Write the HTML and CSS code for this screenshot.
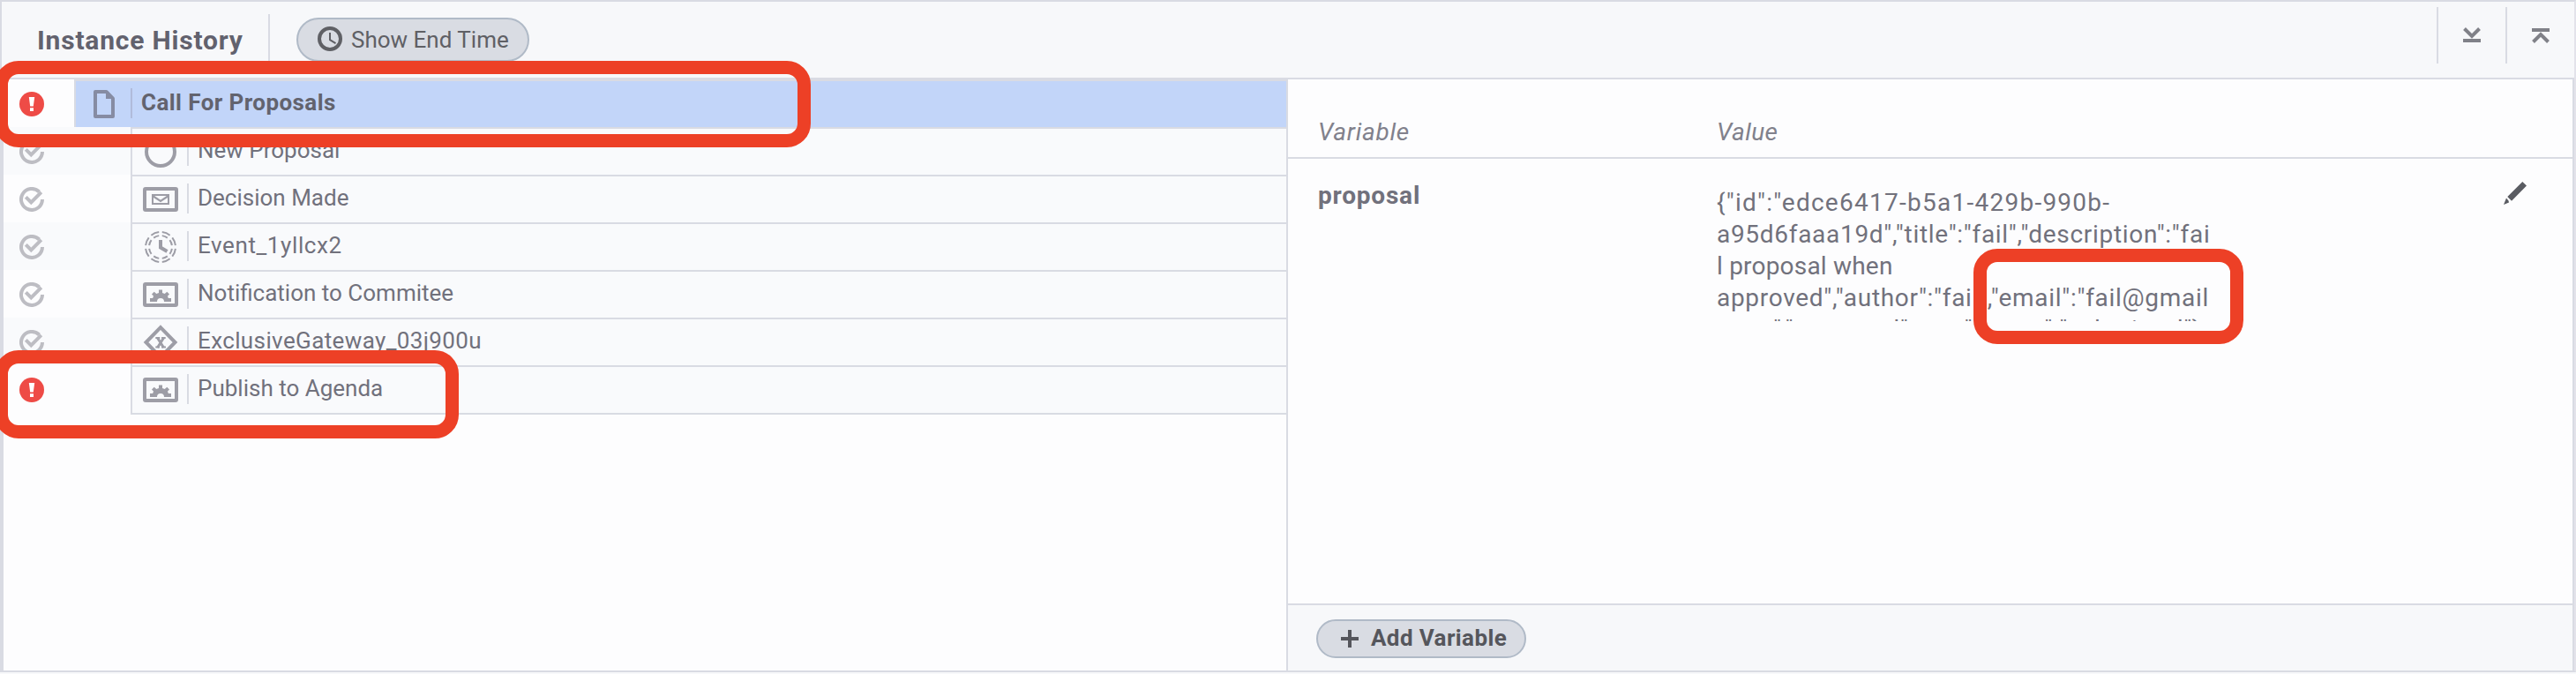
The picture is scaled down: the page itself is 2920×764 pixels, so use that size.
FILE: index.html
```html
<!DOCTYPE html>
<html lang="en">
<head>
<meta charset="utf-8">
<title>Instance History</title>
<link rel="stylesheet" href="styles.css">
</head>
<body>
<svg class="defs" width="0" height="0" aria-hidden="true">
  <symbol id="check" viewBox="0 0 28 28"><path d="M26 14A12 12 0 1 1 22.5 5.5" fill="none" stroke="currentColor" stroke-width="4"/><path d="M7.3 11.3l6 6.1L24.8 5.9" fill="none" stroke="currentColor" stroke-width="4"/></symbol>
  <symbol id="alert" viewBox="0 0 28 28"><circle cx="14" cy="14" r="14" fill="#ee4b46"/><path d="M10.8 6h6.4l-1.4 10.4h-3.6zM12 18.2h4V22h-4z" fill="#fff"/></symbol>
  <symbol id="task" viewBox="0 0 40 28"><rect x="2" y="2" width="36" height="24" rx="1" fill="none" stroke="currentColor" stroke-width="4"/><path d="M8 22v-4h3.2q.2-1.3.9-2.3L10 13.500l2.700-2.700 2.600 2.300 2.700-1V8.500h4v3.600l2.700 1 2.600-2.300L30 13.500l-2.100 2.200q.7 1 .9 2.300H32v4h-8a4 4 0 0 0-8 0z" fill="currentColor"/></symbol>
  <symbol id="message" viewBox="0 0 40 28"><rect x="2" y="2" width="36" height="24" rx="1" fill="none" stroke="currentColor" stroke-width="4"/><rect x="11" y="9" width="18" height="10" fill="none" stroke="currentColor" stroke-width="2"/><path d="M11 10l9 6 9-6" fill="none" stroke="currentColor" stroke-width="2.200"/></symbol>
  <symbol id="start" viewBox="0 0 36 36"><circle cx="18" cy="18" r="16" fill="none" stroke="currentColor" stroke-width="4"/></symbol>
  <symbol id="timer" viewBox="0 0 36 36"><g fill="none" stroke="currentColor" stroke-width="2"><circle cx="18" cy="18" r="17" pathLength="80" stroke-dasharray="7.200 2.800" stroke-dashoffset="-1.400"/><circle cx="18" cy="18" r="13" pathLength="80" stroke-dasharray="6.400 3.600" stroke-dashoffset="-1.800"/></g><path d="M18 10v8.500l7.500 4.500" fill="none" stroke="currentColor" stroke-width="4"/></symbol>
  <symbol id="gateway" viewBox="0 0 40 40"><path d="M20 3.200L36.500 20 20 36.800 3.500 20z" fill="none" stroke="currentColor" stroke-width="4"/><path d="M16.500 15l7 11M23.500 15l-7 11" fill="none" stroke="currentColor" stroke-width="3"/><path d="M14.300 15h5M21 15h4.700M14.300 25.500h4.700M21 25.500h5" fill="none" stroke="currentColor" stroke-width="2"/></symbol>
  <symbol id="doc" viewBox="0 0 24 32"><path d="M2 2h12.500L22 9.700V30H2z" fill="none" stroke="currentColor" stroke-width="4" stroke-linejoin="round"/><path d="M14 1l9 9h-9z" fill="currentColor"/></symbol>
</svg>

<div class="frame">
  <header class="header">
    <h1 class="title">Instance History</h1>
    <span class="header-sep"></span>
    <button class="pill pill-time">
      <svg width="28" height="28" viewBox="0 0 28 28" fill="none" stroke="currentColor"><circle cx="14" cy="14" r="12" stroke-width="4"/><path d="M14 7v8.200l6.500 4" stroke-width="2"/></svg>
      <span>Show End Time</span>
    </button>
    <div class="tools">
      <button class="tool"><svg width="20" height="20" viewBox="0 0 20 20"><path d="M1.500 2.500L10 11l8.500-8.500" fill="none" stroke="currentColor" stroke-width="4"/><path d="M0 14h20v4H0z" fill="currentColor"/></svg></button>
      <button class="tool"><svg width="20" height="20" viewBox="0 0 20 20"><path d="M1.500 17.500L10 9l8.500 8.500" fill="none" stroke="currentColor" stroke-width="4"/><path d="M0 2h20v4H0z" fill="currentColor"/></svg></button>
    </div>
  </header>

  <main class="panels">
    <section class="history">
      <div class="row row-root">
        <div class="state"><svg class="badge"><use href="#alert"/></svg></div>
        <div class="item"><span class="icon"><svg width="24" height="32"><use href="#doc"/></svg></span><span class="name">Call For Proposals</span></div>
      </div>
      <div class="row">
        <div class="state"><svg class="badge"><use href="#check"/></svg></div>
        <div class="item"><span class="icon"><svg width="36" height="36"><use href="#start"/></svg></span><span class="name">New Proposal</span></div>
      </div>
      <div class="row">
        <div class="state"><svg class="badge"><use href="#check"/></svg></div>
        <div class="item"><span class="icon"><svg width="40" height="28"><use href="#message"/></svg></span><span class="name">Decision Made</span></div>
      </div>
      <div class="row">
        <div class="state"><svg class="badge"><use href="#check"/></svg></div>
        <div class="item"><span class="icon"><svg width="36" height="36"><use href="#timer"/></svg></span><span class="name wide">Event_1yllcx2</span></div>
      </div>
      <div class="row">
        <div class="state"><svg class="badge"><use href="#check"/></svg></div>
        <div class="item"><span class="icon"><svg width="40" height="28"><use href="#task"/></svg></span><span class="name">Notification to Commitee</span></div>
      </div>
      <div class="row">
        <div class="state"><svg class="badge"><use href="#check"/></svg></div>
        <div class="item"><span class="icon"><svg width="40" height="40"><use href="#gateway"/></svg></span><span class="name open">ExclusiveGateway_03j900u</span></div>
      </div>
      <div class="row row-last">
        <div class="state"><svg class="badge"><use href="#alert"/></svg></div>
        <div class="item"><span class="icon"><svg width="40" height="28"><use href="#task"/></svg></span><span class="name">Publish to Agenda</span></div>
      </div>
    </section>

    <section class="variables">
      <div class="vars-head">
        <span class="col-name">Variable</span>
        <span class="col-value">Value</span>
      </div>
      <div class="vars-body">
        <span class="var-name">proposal</span>
        <div class="var-value">
          <div class="line l1">{"id":"edce6417-b5a1-429b-990b-</div>
          <div class="line l2">a95d6faaa19d","title":"fail","description":"fai</div>
          <div class="line">l proposal when</div>
          <div class="line l2">approved","author":"fail","email":"fail@gmail</div>
          <div class="line l2">.com","approved":true,"status":"submitted"}</div>
        </div>
        <svg class="pencil" width="26" height="26" viewBox="0 0 26 26" fill="currentColor"><path d="M21.300 0L26 4.500 9 21.700 4.300 17zM3 18.500L0 26l6-2.500-.5-2z"/></svg>
      </div>
      <footer class="vars-foot">
        <button class="pill pill-add">
          <svg width="20" height="20" viewBox="0 0 20 20" fill="currentColor"><path d="M8 0h4v8h8v4h-8v8H8v-8H0V8h8z"/></svg>
          <span>Add Variable</span>
        </button>
      </footer>
    </section>
  </main>
</div>

<div class="mark mark-root"></div>
<div class="mark mark-publish"></div>
<div class="mark mark-email"></div>
</body>
</html>
```
FILE: styles.css
```css
* { box-sizing: border-box; }

body {
  margin: 0;
  width: 2920px;
  height: 764px;
  position: relative;
  overflow: hidden;
  background: #f7f8fa;
  font-family: Roboto, "Liberation Sans", sans-serif;
  color: #71717c;
}

svg { display: block; flex: none; }
.defs { position: absolute; }
button { font: inherit; color: inherit; padding: 0; margin: 0; background: none; border: 0; }

.frame {
  display: flex;
  flex-direction: column;
  height: 762px;
  border: 2px solid #d9dbe3;
  border-right-color: #e3e3ea;
}

.header {
  display: flex;
  flex: none;
  height: 88px;
  border-bottom: 2px solid #d9dbe3;
  background: #f7f8fa;
}

.title {
  margin: 0;
  padding-left: 40px;
  width: 302px;
  font-size: 30px;
  line-height: 87px;
  font-weight: 700;
  letter-spacing: 0.8px;
  white-space: nowrap;
  color: #62626e;
}

.header-sep { width: 2px; height: 56px; margin-top: 14px; background: #d9dbe3; }

.pill {
  display: flex;
  align-items: center;
  border: 2px solid #b0bac7;
  background: #d9dce3;
  font-size: 26px;
  white-space: nowrap;
}

.pill-time {
  width: 264px;
  height: 50px;
  margin: 18px 0 0 30px;
  padding-left: 22px;
  gap: 10px;
  border-radius: 25px;
  color: #5f6065;
}
.pill-time svg { margin-top: -2px; }

.tools { display: flex; margin-left: auto; padding-top: 6px; }
.tool {
  display: flex;
  justify-content: center;
  width: 78px;
  height: 64px;
  padding-top: 22px;
  border-left: 2px solid #d9dbe3;
  color: #808188;
}

.panels { display: flex; flex: 1; min-height: 0; }

.history {
  width: 1458px;
  border-left: 2px solid #d9dbe3;
  border-right: 2px solid #d9dbe3;
  background: #fdfdfe;
}

.row { display: flex; height: 54px; }
.row:nth-child(even) { background: #f9fafc; }
.state { width: 144px; padding: 14px 0 0 18px; flex: none; }
.badge { width: 28px; height: 28px; color: #bdbdc3; }

.item {
  display: flex;
  flex: 1;
  height: 54px;
  border-left: 2px solid #d9dbe3;
  border-top: 2px solid #d9dbe3;
  background: #f9fafc;
}
.row-root .state { width: 80px; }
.row-root .item { background: #c2d5f9; }
.row-last .item { height: 56px; border-bottom: 2px solid #d9dbe3; }

.icon {
  display: flex;
  align-items: center;
  justify-content: center;
  width: 64px;
  color: #9d9da6;
}
.row-root .icon { color: #868ca3; }

.name {
  height: 34px;
  margin: 8px 0 0 -2px;
  padding-left: 10px;
  border-left: 2px solid #d9dbe3;
  font-size: 26px;
  line-height: 33px;
  white-space: nowrap;
}
.open { letter-spacing: 0.38px; }
.wide { letter-spacing: 0.6px; }
.row-root .name {
  border-color: #b0bbdb;
  font-weight: 700;
  letter-spacing: 0.42px;
  color: #62636e;
}

.variables {
  display: flex;
  flex-direction: column;
  flex: 1;
  border-right: 2px solid #d9dbe3;
  background: #fdfdfe;
  font-size: 28px;
  line-height: 36px;
}

.vars-head {
  display: flex;
  height: 90px;
  padding: 42px 0 0 34px;
  border-bottom: 2px solid #d9dbe3;
  font-style: italic;
  color: #81818c;
}
.col-name { width: 452px; letter-spacing: 0.7px; }
.col-value { letter-spacing: 0.4px; }

.vars-body { display: flex; flex: 1; min-height: 0; padding-left: 34px; }
.var-name { width: 452px; padding-top: 24px; font-weight: 700; letter-spacing: 0.8px; }
.var-value { width: 600px; height: 152px; margin-top: 32px; overflow: hidden; }
.line { white-space: nowrap; letter-spacing: 0.2px; }
.l1 { letter-spacing: 1.26px; }
.l2 { letter-spacing: 0.7px; }
.pencil { margin: 26px 52px 0 auto; color: #5a5c62; }

.vars-foot {
  height: 76px;
  padding: 16px 0 0 32px;
  border-top: 2px solid #d9dbe3;
  background: #f7f8fa;
}
.pill-add {
  width: 238px;
  height: 44px;
  padding-left: 26px;
  gap: 14px;
  border-radius: 22px;
  font-weight: 700;
  line-height: 30px;
  letter-spacing: 0.4px;
  color: #55565c;
}
.pill-add span { margin-top: -3px; }

/* Annotation outlines laid over the panel */
.mark { position: absolute; border: 15px solid #ed4026; border-radius: 27px; }
.mark-root { left: -6px; top: 69px; width: 925px; height: 98px; }
.mark-publish { left: -6px; top: 397px; width: 526px; height: 100px; }
.mark-email { left: 2237px; top: 282px; width: 306px; height: 108px; }
```
